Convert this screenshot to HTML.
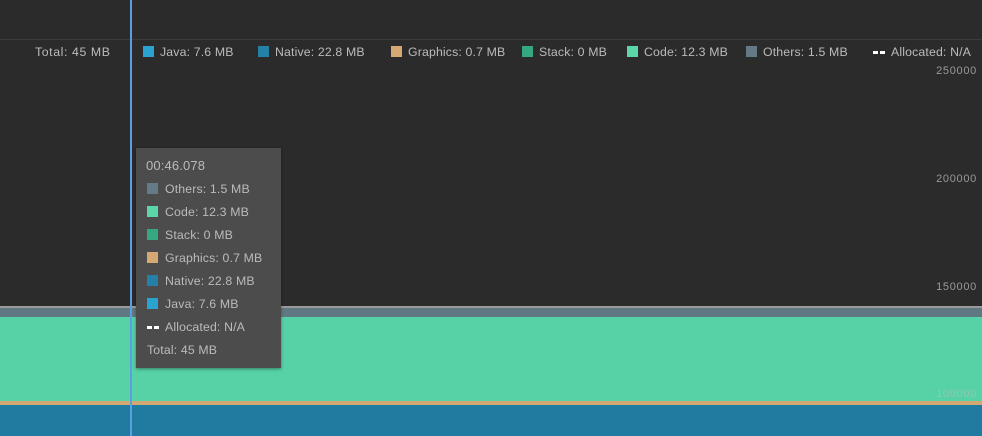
<!DOCTYPE html><html><head><style>
body{margin:0;width:982px;height:436px;background:#2b2b2b;overflow:hidden;position:relative;font-family:"Liberation Sans",sans-serif;font-size:12.3px;letter-spacing:.15px;color:#bbbbbb}
.a{position:absolute;white-space:nowrap}
.sw{position:absolute;width:11px;height:11px}
.d{position:absolute;width:12px;height:3px;background:linear-gradient(90deg,#fff 0 5px,transparent 5px 7px,#fff 7px)}
.ax{position:absolute;right:5px;font-size:11px;color:#999;letter-spacing:.7px}
</style></head><body>
<div class="a" style="left:0;top:39px;width:982px;height:1px;background:#3c3c3c"></div>
<div class="a" style="left:0;top:306px;width:982px;height:2px;background:#9a9a9a"></div>
<div class="a" style="left:0;top:308px;width:982px;height:9px;background:#607882"></div>
<div class="a" style="left:0;top:317px;width:982px;height:84px;background:#57d1a6"></div>
<div class="a" style="left:0;top:401px;width:982px;height:4px;background:#d2a772"></div>
<div class="a" style="left:0;top:405px;width:982px;height:31px;background:#217ba0"></div>
<div class="ax" style="top:65px">250000</div>
<div class="ax" style="top:173px">200000</div>
<div class="ax" style="top:281px">150000</div>
<div class="ax" style="top:388px;color:#8fc9b0">100000</div>
<div class="a" style="left:35px;top:45px;letter-spacing:.6px">Total: 45 MB</div>
<div class="sw" style="left:143px;top:46px;background:#2aa3d1"></div><div class="a" style="left:160px;top:45px">Java: 7.6 MB</div>
<div class="sw" style="left:258px;top:46px;background:#2580a7"></div><div class="a" style="left:275px;top:45px">Native: 22.8 MB</div>
<div class="sw" style="left:391px;top:46px;background:#d6a974"></div><div class="a" style="left:408px;top:45px">Graphics: 0.7 MB</div>
<div class="sw" style="left:522px;top:46px;background:#35a882"></div><div class="a" style="left:539px;top:45px">Stack: 0 MB</div>
<div class="sw" style="left:627px;top:46px;background:#5ad6a8"></div><div class="a" style="left:644px;top:45px">Code: 12.3 MB</div>
<div class="sw" style="left:746px;top:46px;background:#647a86"></div><div class="a" style="left:763px;top:45px">Others: 1.5 MB</div>
<div class="d" style="left:873px;top:51px"></div><div class="a" style="left:891px;top:45px">Allocated: N/A</div>
<div class="a" style="left:136px;top:148px;width:145px;height:220px;background:#4b4c4b;box-shadow:0 1px 3px rgba(0,0,0,.4)"></div>
<div class="a" style="left:146px;top:158px;font-size:13px">00:46.078</div>
<div class="sw" style="left:147px;top:183px;background:#647a86"></div><div class="a" style="left:165px;top:182px">Others: 1.5 MB</div>
<div class="sw" style="left:147px;top:206px;background:#5ad6a8"></div><div class="a" style="left:165px;top:205px">Code: 12.3 MB</div>
<div class="sw" style="left:147px;top:229px;background:#35a882"></div><div class="a" style="left:165px;top:228px">Stack: 0 MB</div>
<div class="sw" style="left:147px;top:252px;background:#d6a974"></div><div class="a" style="left:165px;top:251px">Graphics: 0.7 MB</div>
<div class="sw" style="left:147px;top:275px;background:#2580a7"></div><div class="a" style="left:165px;top:274px">Native: 22.8 MB</div>
<div class="sw" style="left:147px;top:298px;background:#2aa3d1"></div><div class="a" style="left:165px;top:297px">Java: 7.6 MB</div>
<div class="d" style="left:147px;top:326px"></div><div class="a" style="left:165px;top:320px">Allocated: N/A</div>
<div class="a" style="left:147px;top:343px">Total: 45 MB</div>
<div class="a" style="left:130px;top:0;width:2px;height:436px;background:#5d9de2"></div>
</body></html>
